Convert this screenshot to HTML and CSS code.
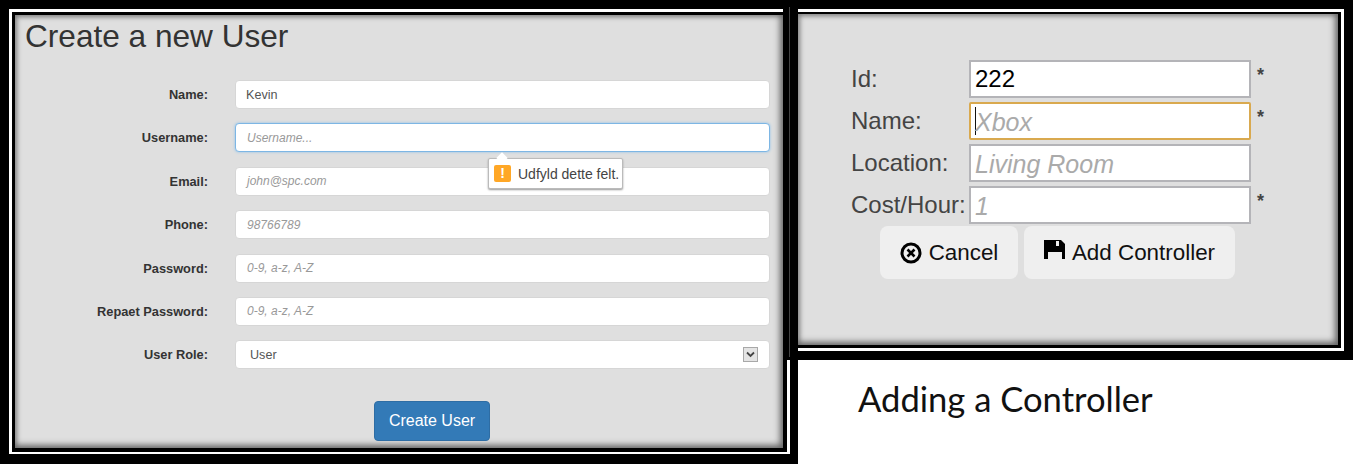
FILE: index.html
```html
<!DOCTYPE html>
<html>

<head>
	<title>Create a new User</title>
	<meta charset="utf-8" />
	<link rel="stylesheet" href="styles.css">
</head>

<body>
	<div class="sheet">

		<div class="frame frame-user">
			<div class="panel panel-user">
				<h1>Create a new User</h1>

				<div class="user-form">
					<label>Name:</label>
					<div class="field"><span class="value">Kevin</span></div>

					<label>Username:</label>
					<div class="field focused"><span class="hint">Username...</span></div>

					<label>Email:</label>
					<div class="field"><span class="hint">john@spc.com</span></div>

					<label>Phone:</label>
					<div class="field"><span class="hint">98766789</span></div>

					<label>Password:</label>
					<div class="field"><span class="hint">0-9, a-z, A-Z</span></div>

					<label>Repaet Password:</label>
					<div class="field"><span class="hint">0-9, a-z, A-Z</span></div>

					<label>User Role:</label>
					<div class="field select">
						<span class="value">User</span>
						<span class="select-arrow">
							<svg width="9" height="7" viewBox="0 0 9 7"><path d="M1 1.5l3.5 3.5 3.5-3.5" fill="none" stroke="#444" stroke-width="1.8"/></svg>
						</span>
					</div>
				</div>

				<!-- validation bubble -->
				<div class="bubble">
					<span class="bubble-icon">!</span>
					<span>Udfyld dette felt.</span>
				</div>

				<div class="submit-row">
					<button class="btn-create">Create User</button>
				</div>
			</div>
		</div>

		<div class="right-col">
			<div class="frame frame-ctrl">
				<div class="panel panel-ctrl">
					<div class="ctrl-form">
						<label>Id:</label>
						<div class="box"><span class="box-value">222</span></div>
						<span class="req">*</span>

						<label>Name:</label>
						<div class="box active"><span class="caret"></span><span class="box-hint">Xbox</span></div>
						<span class="req">*</span>

						<label>Location:</label>
						<div class="box"><span class="box-hint">Living Room</span></div>
						<span></span>

						<label>Cost/Hour:</label>
						<div class="box"><span class="box-hint">1</span></div>
						<span class="req">*</span>
					</div>

					<div class="ctrl-buttons">
						<button class="btn-plain btn-cancel">
							<svg width="22" height="22" viewBox="0 0 22 22">
								<circle cx="11" cy="11" r="9" fill="none" stroke="#000" stroke-width="3"/>
								<path d="M7.5 7.5l7 7M14.5 7.5l-7 7" stroke="#000" stroke-width="2.6"/>
							</svg>
							Cancel
						</button>
						<button class="btn-plain btn-add">
							<svg class="icon-save" width="21" height="19" viewBox="0 0 21 19">
								<path d="M0 0H17L21 4V19H18V12H4V19H0Z M12 1V6H15V1Z" fill="#000" fill-rule="evenodd"/>
							</svg>
							Add Controller
						</button>
					</div>
				</div>
			</div>

			<p class="caption">Adding a Controller</p>
		</div>

	</div>
</body>
</html>
```

FILE: styles.css
```css
html, body {
	margin: 0;
	background: #fff;
}

.sheet {
	display: flex;
	width: 1354px;
	height: 464px;
	overflow: hidden;
	font-family: "Liberation Sans", Arial, sans-serif;
}

/* black / white / black picture frame */
.frame {
	box-sizing: border-box;
	border: 9px solid #000;
	background: #fff;
}

.frame-user {
	flex: none;
	width: 798px;
	height: 464px;
	border-width: 9px 8px 10px 9px;
	padding: 3px 3px 2px 3px;
}

.right-col {
	flex: none;
	width: 570px;
	margin-left: -15px;
}

.frame-ctrl {
	position: relative;
	width: 570px;
	height: 360px;
	border-left-width: 15px;
	padding: 3px 3px 3px 0;
}

/* the seam where the second picture sits on the first */
.frame-ctrl::before {
	content: "";
	position: absolute;
	left: -9px;
	top: -2px;
	bottom: -6px;
	width: 1px;
	background: #444;
}

.panel {
	box-sizing: border-box;
	height: 100%;
	border: 3px solid #000;
	background: #dfdfdf;
	box-shadow: inset -3px -3px 6px #666, inset 2px 2px 5px #888;
}

/* left form */
.panel-user {
	position: relative;
	padding: 0 13px 0 10px;
	border-width: 3px 4px 4px 3px;
}

h1 {
	margin: 0;
	padding-top: 5px;
	font-size: 31.6px;
	font-weight: 400;
	line-height: 33px;
	color: #333;
}

.user-form {
	display: grid;
	grid-template-columns: 183px 535px;
	column-gap: 27px;
	row-gap: 14.4px;
	align-items: center;
	margin-top: 27px;
}

.user-form label {
	text-align: right;
	font-size: 12.8px;
	font-weight: 700;
	color: #333;
}

.field {
	box-sizing: border-box;
	display: flex;
	align-items: center;
	justify-content: space-between;
	height: 29px;
	padding: 0 11px 0 10px;
	background: #fff;
	border: 1px solid #d6d6d6;
	border-radius: 4px;
	font-size: 12px;
}

.field.focused {
	border-color: #7db6e4;
	box-shadow: 0 0 3px #8fc1ea;
}

.value {
	color: #555;
	font-size: 12.6px;
}

.hint {
	padding-left: 1px;
	color: #999;
	font-style: italic;
}

.select {
	padding: 0 11px 0 14px;
}

.select-arrow {
	box-sizing: border-box;
	display: flex;
	align-items: center;
	justify-content: center;
	width: 15px;
	height: 15px;
	background: #e4e4e4;
	border: 1px solid #a8a8a8;
}

.bubble {
	position: absolute;
	left: 473px;
	top: 143px;
	box-sizing: border-box;
	display: flex;
	align-items: center;
	gap: 7px;
	width: 135px;
	height: 31px;
	padding: 0 5px;
	background: #fff;
	border: 1px solid #bbb;
	border-radius: 2px;
	box-shadow: 0 1px 2px #999;
	font-size: 14px;
	color: #444;
	white-space: nowrap;
}

.bubble::before {
	content: "";
	position: absolute;
	left: 9px;
	top: -5px;
	width: 8px;
	height: 8px;
	background: #fff;
	transform: rotate(45deg);
}

.bubble-icon {
	flex: none;
	width: 17px;
	height: 17px;
	background: #ffa726;
	border-radius: 2px;
	color: #fff;
	font-size: 14px;
	font-weight: 700;
	line-height: 17px;
	text-align: center;
}

.submit-row {
	margin-top: 31.6px;
	padding-left: 349px;
}

.btn-create {
	width: 116px;
	height: 40px;
	padding: 0;
	background: #337ab7;
	border: 1px solid #2e6da4;
	border-radius: 4px;
	color: #fff;
	font-family: inherit;
	font-size: 16px;
}

/* right form */
.panel-ctrl {
	padding: 46px 0 0 53px;
	border-width: 2px 3px 3px 0;
}

.ctrl-form {
	display: grid;
	grid-template-columns: 118px 282px 20px;
	row-gap: 4px;
	align-items: center;
}

.ctrl-form label {
	font-size: 24px;
	color: #444;
}

.box {
	box-sizing: border-box;
	display: flex;
	align-items: center;
	height: 38px;
	padding: 0 4px;
	background: #fff;
	border: 2px solid #b4b4b8;
	font-size: 24px;
}

.box.active {
	border-color: #d9a94f;
	border-radius: 2px;
}

.box-value {
	color: #000;
}

.box-hint {
	padding-top: 2px;
	color: #aaa;
	font-size: 25px;
	font-style: italic;
}

.caret {
	width: 1px;
	height: 28px;
	background: #111;
	margin-right: -1px;
}

.req {
	padding: 0 0 8px 6px;
	font-size: 18px;
	font-weight: 700;
	color: #444;
}

.ctrl-buttons {
	display: flex;
	gap: 6px;
	margin: 2px 0 0 29px;
}

.btn-plain {
	display: flex;
	align-items: center;
	justify-content: center;
	gap: 7px;
	height: 53px;
	padding: 0;
	background: #efefef;
	border: 0;
	border-radius: 8px;
	color: #111;
	font-family: inherit;
	font-size: 22.4px;
}

.btn-cancel {
	width: 138px;
}

.btn-add {
	width: 211px;
}

.icon-save {
	margin-bottom: 6px;
}

.caption {
	margin: 19px 0 0 75px;
	font-family: Lato, "Open Sans", sans-serif;
	font-size: 34.6px;
	line-height: 40px;
	color: #111;
}
```
